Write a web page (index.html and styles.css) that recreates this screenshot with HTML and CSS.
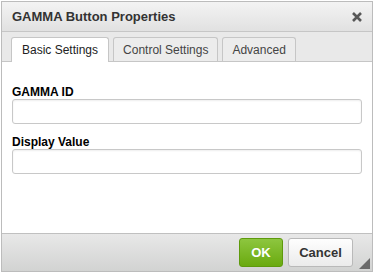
FILE: index.html
```html
<!DOCTYPE html>
<html lang="en">
<head>
  <meta charset="UTF-8" />
  <title>GAMMA Button Properties</title>
  <link rel="stylesheet" href="styles.css">
</head>
<body>
  <div class="dialog">
    <div class="titlebar">
      <span class="title">GAMMA Button Properties</span>
      <svg class="close" width="10" height="10" viewBox="0 0 10 10">
        <path d="M1 1L9 9M9 1L1 9" stroke="#575757" stroke-width="2.6" />
      </svg>
    </div>
    <div class="tabs">
      <div class="tab active">Basic Settings</div>
      <div class="tab">Control Settings</div>
      <div class="tab">Advanced</div>
    </div>
    <div class="content">
      <label class="field">GAMMA ID
        <input type="text">
      </label>
      <label class="field">Display Value
        <input type="text">
      </label>
    </div>
    <div class="footer">
      <button class="btn ok">OK</button>
      <button class="btn cancel">Cancel</button>
      <span class="grip"></span>
    </div>
  </div>
</body>
</html>
```

FILE: styles.css
```css
*, *::before, *::after { box-sizing: border-box; }
body {
  margin: 0;
  background: #fff;
  font-family: 'Liberation Sans', Arial, sans-serif;
  color: #333;
}
.dialog {
  margin: 1px 0 0 1px;
  width: 372px;
  height: 271px;
  border: 1px solid #bcbcbc;
  display: flex; flex-direction: column;
  background: #fff;
}

/* タイトル */
.titlebar {
  height: 30px;
  padding: 0 10px 0 10px;
  display: flex; align-items: center; justify-content: space-between;
  background: linear-gradient(#f3f3f3, #e1e1e1);
  border-bottom: 1px solid #c6c6c6;
}
.title { font-weight: bold; font-size: 13px; color: #333; }
.close { display: block; margin-right: 0; }

/* タブ */
.tabs {
  height: 30px;
  background: #e9e9e9;
  padding: 5px 0 0 9px;
  display: flex; gap: 4px; align-items: flex-end;
  border-bottom: 1px solid #c6c6c6;
}
.tab {
  height: 24px;
  padding: 0 9px;
  display: flex; align-items: center;
  font-size: 12px; color: #444;
  background: #ececec;
  border: 1px solid #c6c6c6; border-bottom: none;
  border-radius: 3px 3px 0 0;
}
.tab.active {
  background: #fff;
  height: 25px;
  margin-bottom: -1px;
  padding: 0 10px;
  color: #222;
}

/* 入力 */
.content {
  flex: 1;
  padding: 23px 10px 0 10px;
}
.field {
  display: block;
  font-weight: bold; font-size: 12px; line-height: 14px; color: #000;
  margin-bottom: 11px;
}
.field input {
  display: block;
  width: 100%; height: 25px;
  margin-top: 0;
  border: 1px solid #c8c8c8; border-radius: 3px;
  box-shadow: inset 0 1px 2px rgba(0,0,0,.07);
}

/* フッター */
.footer {
  height: 38px;
  border-top: 1px solid #c0c0c0;
  background: linear-gradient(#e8e8e8, #d2d3d2);
  display: flex; justify-content: flex-end; align-items: center; gap: 5px;
  padding-right: 19px;
  position: relative;
}
.btn {
  height: 29px;
  font-family: inherit; font-weight: bold; font-size: 13px;
  border-radius: 3px;
  cursor: pointer;
}
.ok {
  width: 44px;
  color: #fff;
  background: linear-gradient(#8dc63f, #6aaa0f);
  border: 1px solid #5e9a0c;
}
.cancel {
  width: 65px;
  color: #333;
  background: linear-gradient(#fefefe, #ebebeb);
  border: 1px solid #b9b9b9;
}
.grip {
  position: absolute; right: 2px; bottom: 2px;
  width: 0; height: 0;
  border-left: 11px solid transparent;
  border-bottom: 11px solid #6a6a6a;
}
```
